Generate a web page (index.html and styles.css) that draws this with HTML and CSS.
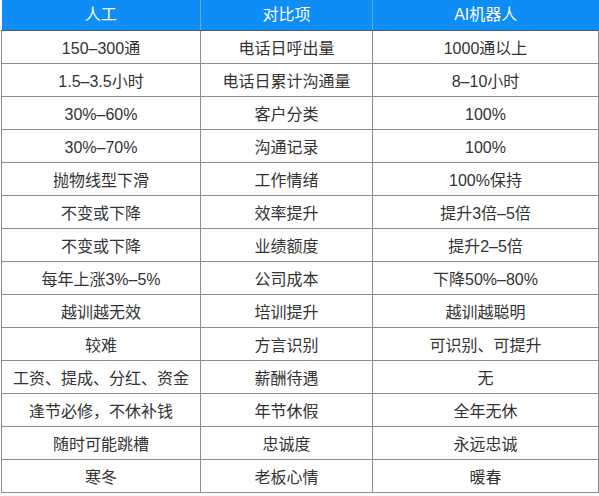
FILE: index.html
```html
<!DOCTYPE html>
<html lang="zh-CN">
<head>
<meta charset="utf-8">
<title>人工 vs AI机器人</title>
<link rel="stylesheet" href="styles.css">
</head>
<body>
<table class="cmp">
  <colgroup>
    <col class="c1"><col class="c2"><col class="c3">
  </colgroup>
  <thead>
    <tr><th>人工</th><th>对比项</th><th>AI机器人</th></tr>
  </thead>
  <tbody>
    <tr><td>150–300通</td><td>电话日呼出量</td><td>1000通以上</td></tr>
    <tr><td>1.5–3.5小时</td><td>电话日累计沟通量</td><td>8–10小时</td></tr>
    <tr><td>30%–60%</td><td>客户分类</td><td>100%</td></tr>
    <tr><td>30%–70%</td><td>沟通记录</td><td>100%</td></tr>
    <tr><td>抛物线型下滑</td><td>工作情绪</td><td>100%保持</td></tr>
    <tr><td>不变或下降</td><td>效率提升</td><td>提升3倍–5倍</td></tr>
    <tr><td>不变或下降</td><td>业绩额度</td><td>提升2–5倍</td></tr>
    <tr><td>每年上涨3%–5%</td><td>公司成本</td><td>下降50%–80%</td></tr>
    <tr><td>越训越无效</td><td>培训提升</td><td>越训越聪明</td></tr>
    <tr><td>较难</td><td>方言识别</td><td>可识别、可提升</td></tr>
    <tr><td>工资、提成、分红、资金</td><td>薪酬待遇</td><td>无</td></tr>
    <tr><td>逢节必修，不休补钱</td><td>年节休假</td><td>全年无休</td></tr>
    <tr><td>随时可能跳槽</td><td>忠诚度</td><td>永远忠诚</td></tr>
    <tr><td>寒冬</td><td>老板心情</td><td>暖春</td></tr>
  </tbody>
</table>
</body>
</html>
```
FILE: styles.css
```css
html, body {
  margin: 0;
  padding: 0;
  background: #ffffff;
}
body {
  font-family: "Liberation Sans", "Noto Sans CJK SC", sans-serif;
  color: #333333;
}
.cmp {
  border-collapse: collapse;
  table-layout: fixed;
  width: 597px;
  margin-left: 1px;
  font-size: 16px;
  line-height: 20px;
}
.c1 { width: 199px; }
.c2 { width: 172px; }
.c3 { width: 226px; }
.cmp th {
  background: #0d8df5;
  color: #ffffff;
  font-weight: normal;
  height: 30px;
  padding: 0;
  text-align: center;
  vertical-align: middle;
  border-left: 1px solid #5aaef5;
  border-right: 1px solid #5aaef5;
  border-bottom: 1px solid #4a5a6e;
  border-top: none;
}
.cmp th:first-child { border-left: none; }
.cmp th:last-child { border-right: none; }
.cmp td {
  height: 29px;
  padding: 3px 0 0;
  text-align: center;
  vertical-align: middle;
  border: 1px solid #8c8c8c;
  white-space: nowrap;
}
```
